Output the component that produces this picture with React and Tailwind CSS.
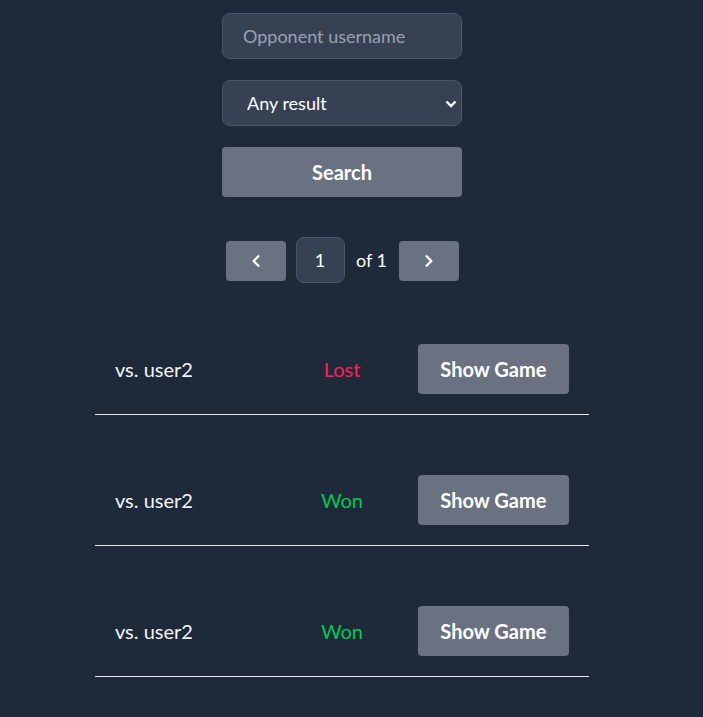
import React from "react";
import { FaChevronLeft, FaChevronRight } from "react-icons/fa";

function GameRow({ opponent, result }) {
  const won = result === "Won";
  return (
    <div className="mt-10 grid grid-cols-3 items-center px-5 py-5 border-b border-gray-200">
      <span className="text-xl text-gray-100">vs. {opponent}</span>
      <span className={"text-xl text-center " + (won ? "text-green-500" : "text-rose-500")}>
        {result}
      </span>
      <button className="h-[50px] w-full rounded bg-gray-500 text-xl font-bold text-white">
        Show Game
      </button>
    </div>
  );
}

export default function App() {
  const games = [
    { id: 1, opponent: "user2", result: "Lost" },
    { id: 2, opponent: "user2", result: "Won" },
    { id: 3, opponent: "user2", result: "Won" },
  ];

  return (
    <div
      className="min-h-screen bg-gray-800 pr-[19px] pt-[13px] text-white"
      style={{ fontFamily: 'Lato, sans-serif' }}
    >
      <div className="mx-auto flex w-[240px] flex-col gap-[21px]">
        <input
          placeholder="Opponent username"
          className="h-[46px] rounded-lg border border-gray-600 bg-gray-700 px-5 text-lg text-white placeholder:text-gray-400 outline-none"
        />
        <div className="relative">
          <select className="h-[46px] w-full appearance-none rounded-lg border border-gray-600 bg-gray-700 pl-6 text-lg text-white outline-none">
            <option>Any result</option>
            <option>Won</option>
            <option>Lost</option>
          </select>
          <svg
            className="pointer-events-none absolute right-[5px] top-[20px]"
            width="12"
            height="8"
            viewBox="0 0 12 8"
            fill="none"
            stroke="white"
            strokeWidth="2.4"
          >
            <polyline points="1.5,1.5 6,6 10.5,1.5" />
          </svg>
        </div>
        <button className="h-[50px] rounded bg-gray-500 text-xl font-bold text-white">
          Search
        </button>
      </div>

      <div className="mt-10 flex items-center justify-center gap-2.5">
        <button className="mt-px flex h-10 w-[60px] items-center justify-center rounded bg-gray-500">
          <FaChevronLeft size={14} />
        </button>
        <div className="flex h-[46px] w-[49px] items-center justify-center rounded-lg border border-gray-600 bg-gray-700 text-lg">
          1
        </div>
        <span className="w-[34px] text-center text-lg">of 1</span>
        <button className="mt-px flex h-10 w-[60px] items-center justify-center rounded bg-gray-500">
          <FaChevronRight size={14} />
        </button>
      </div>

      <div className="mx-auto w-[494px] pt-px">
        {games.map((g) => (
          <GameRow key={g.id} opponent={g.opponent} result={g.result} />
        ))}
      </div>
    </div>
  );
}
